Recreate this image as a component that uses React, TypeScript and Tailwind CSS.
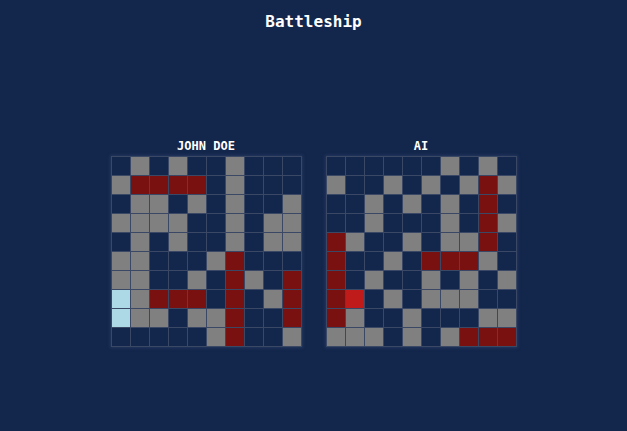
const playerBoard = [
  '0G0G00G000',
  'GRRRR0G000',
  '0GG0G0G00G',
  'GGGG00G0GG',
  '0G0G00G0GG',
  'GG000GR000',
  'GG00G0RG0R',
  'LGRRR0R0GR',
  'LGG0GGR00R',
  '00000GR00G',
];

const aiBoard = [
  '000000G0G0',
  'G00G0G0GRG',
  '00G0G0G0R0',
  '00G000G0RG',
  'RG00G0GGR0',
  'R00G0RRRG0',
  'R0G00G0G0G',
  'RB0G0GGG00',
  'RG00G000GG',
  'GGG0G0GRRR',
];

const cellColors: Record<string, string> = {
  '0': 'bg-[#13264b]',
  G: 'bg-[#808080]',
  R: 'bg-[#7a1111]',
  L: 'bg-[#add8e6]',
  B: 'bg-[#c01b1b]',
};

function Board({ name, rows }: { name: string; rows: string[] }) {
  return (
    <div className="flex flex-col items-center">
      <h2 className="mb-[2px] text-[12px] font-bold leading-4 text-white">{name}</h2>
      <div className="grid grid-cols-10 gap-px bg-[#3a4866] p-px shadow-[0_0_3px_1px_rgba(70,90,130,0.35)]">
        {rows.flatMap((row, r) =>
          row.split('').map((c, i) => (
            <div key={`${r}-${i}`} className={`h-[18px] w-[18px] ${cellColors[c]}`} />
          ))
        )}
      </div>
    </div>
  );
}

export default function App() {
  return (
    <div
      className="flex h-[431px] w-full flex-col items-center bg-[#13264b] pt-[10px]"
      style={{ fontFamily: '"DejaVu Sans Mono", monospace' }}
    >
      <h1 className="text-[16px] font-bold leading-6 text-white">Battleship</h1>
      <div className="mt-[104px] flex gap-6">
        <Board name="JOHN DOE" rows={playerBoard} />
        <Board name="AI" rows={aiBoard} />
      </div>
    </div>
  );
}
